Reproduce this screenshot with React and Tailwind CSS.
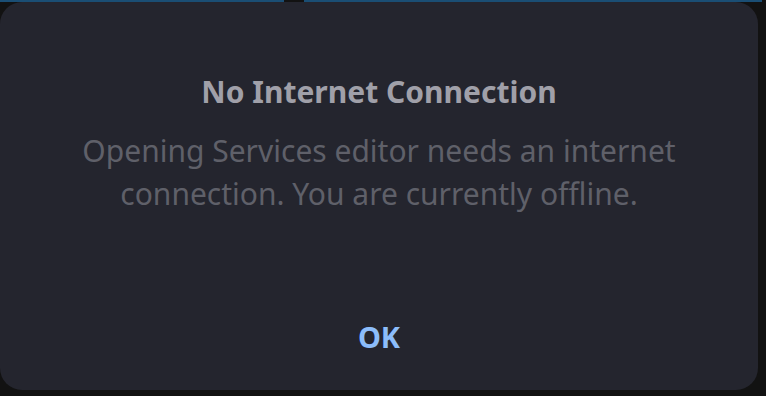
import React from 'react';

const App = () => {
  return (
    <div className="w-[766px] h-[396px] bg-[#121212] flex flex-col overflow-hidden" style={{ fontFamily: '"Noto Sans", "Open Sans", sans-serif' }}>
      {/* top strip */}
      <div className="h-[2px] flex shrink-0">
        <div className="w-[284px] bg-[#1a4e74]" />
        <div className="w-[20px]" />
        <div className="flex-1 bg-[#1a4e74] mr-[4px]" />
      </div>

      <div className="flex-1 flex pb-[6px] pr-[8px]">
        <div className="flex-1 bg-[#24252e] rounded-[22px] flex flex-col items-center pt-[70px]">
          <h1 className="text-[30px] font-bold text-[#a0a0a9] leading-[40px]">No Internet Connection</h1>
          <p className="mt-[17px] text-[30px] text-[#5f6069] text-center leading-[43px] w-[640px]">
            Opening Services editor needs an internet connection. You are currently offline.
          </p>
          <button className="mt-auto mb-[33px] text-[29px] font-bold text-[#8cbdfb] leading-[40px]">OK</button>
        </div>
      </div>
    </div>
  );
};

export default App;
